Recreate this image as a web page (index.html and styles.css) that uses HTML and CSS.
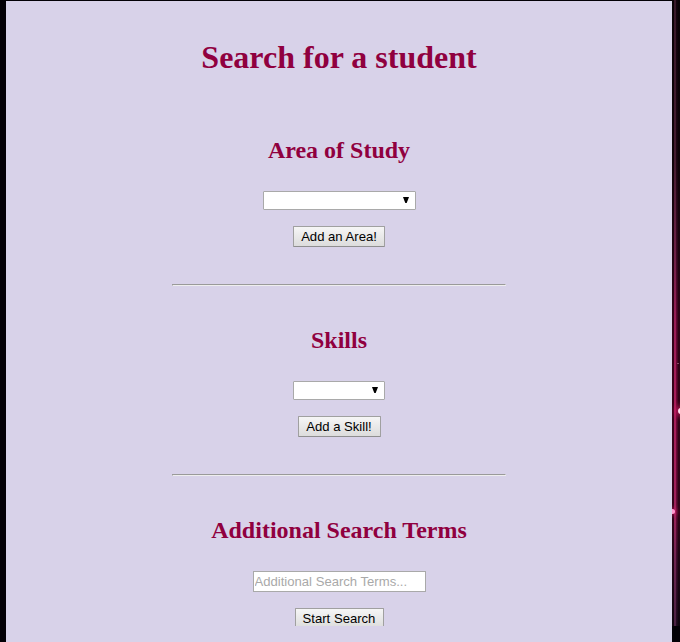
FILE: index.html
```html
<!DOCTYPE html>
<html lang="en">
<head>
<meta charset="utf-8">
<title>Search for a student</title>
<link rel="stylesheet" href="styles.css">
</head>
<body>
<main class="panel">
  <form class="search">
    <h1>Search for a student</h1>
    <section class="group">
      <h2>Area of Study</h2>
      <div class="select area"><svg viewBox="0 0 6 6"><path d="M0 0h6L3.7 6H2.3z"/></svg></div>
      <button type="button" class="btn add-area">Add an Area!</button>
      <hr>
    </section>
    <section class="group">
      <h2>Skills</h2>
      <div class="select skill"><svg viewBox="0 0 6 6"><path d="M0 0h6L3.7 6H2.3z"/></svg></div>
      <button type="button" class="btn add-skill">Add a Skill!</button>
      <hr>
    </section>
    <section class="group">
      <h2>Additional Search Terms</h2>
      <input type="text" class="terms" placeholder="Additional Search Terms...">
      <button type="button" class="btn start">Start Search</button>
    </section>
  </form>
</main>
<div class="backdrop"><i class="star edge"></i><i class="star bright"></i><i class="star faint"></i></div>
</body>
</html>
```
FILE: styles.css
```css
* { box-sizing: border-box; }
body {
  margin: 0;
  height: 642px;
  overflow: hidden;
  display: flex;
  background: #030006;
  font-family: "Liberation Serif", serif;
}
.panel {
  width: 666px;
  height: 641px;
  margin: 1px 0 0 6px;
  background: #d8d2e9;
}
.search {
  height: 625px;
  padding-top: 38px;
  overflow: hidden;
}
h1, h2 {
  margin: 0;
  text-align: center;
  color: #90003f;
  font-weight: bold;
}
h1 { font-size: 32px; line-height: 37px; margin-bottom: 61px; }
h2 { font-size: 24px; line-height: 27px; }
.group {
  height: 190px;
  display: flex;
  flex-direction: column;
  align-items: center;
}
.select {
  height: 19px;
  margin-top: 27px;
  padding-right: 6px;
  display: flex;
  align-items: center;
  justify-content: flex-end;
  background: #fff;
  border: 1px solid #a9a9a9;
  border-radius: 1px;
}
.select svg { width: 6px; height: 6px; margin-bottom: 1px; }
.area { width: 153px; }
.skill { width: 92px; }
.btn {
  height: 21px;
  flex: none;
  margin: 16px 0 0;
  padding: 0;
  border: 1px solid #a0a0a0;
  border-bottom-color: #8f8f8f;
  border-radius: 1px;
  background: linear-gradient(#f6f6f6, #dcdcdc);
  color: #000;
  font: 13.1px/19px "Liberation Sans", sans-serif;
  white-space: nowrap;
}
.add-area { width: 92px; }
.add-skill { width: 83px; }
.start { width: 89px; }
hr {
  width: 334px;
  height: 2px;
  margin: 37px 0 0;
  border: 1px solid;
  border-color: #9a9a9a #eee #eee #9a9a9a;
}
.terms {
  width: 173px;
  height: 21px;
  margin: 27px 0 0;
  padding: 1px;
  border: 1px solid #a9a9a9;
  border-radius: 0;
  background: #fff;
  font: 13.1px "Liberation Sans", sans-serif;
}
.terms::placeholder { color: #a9a9a9; opacity: 1; }

/* Nebula strip beside the panel */
.backdrop {
  position: relative;
  width: 8px;
  height: 626px;
  overflow: hidden;
  background:
    linear-gradient(90deg, rgba(0,0,0,.65) 0 2px, rgba(255,150,190,.12) 2px 4px, rgba(0,0,0,.3) 4px 5px, rgba(0,0,0,.7) 6px),
    linear-gradient(#1c0614 0, #2a0a1c 160px, #5c1038 260px, #8a0c48 320px, #9c0c4c 410px, #90104c 510px, #5a1442 560px, #301030 626px);
}
.star { position: absolute; border-radius: 50%; }
.edge { left: 6px; top: 408px; width: 6px; height: 6px; background: #ffe3f0; box-shadow: 0 0 6px 2px #d81b68; }
.bright { left: -2px; top: 509px; width: 5px; height: 5px; background: #ff9bd0; box-shadow: 0 0 5px 1px #c41560; }
.faint { left: 5px; top: 363px; width: 2px; height: 1px; background: #a06080; }
```
